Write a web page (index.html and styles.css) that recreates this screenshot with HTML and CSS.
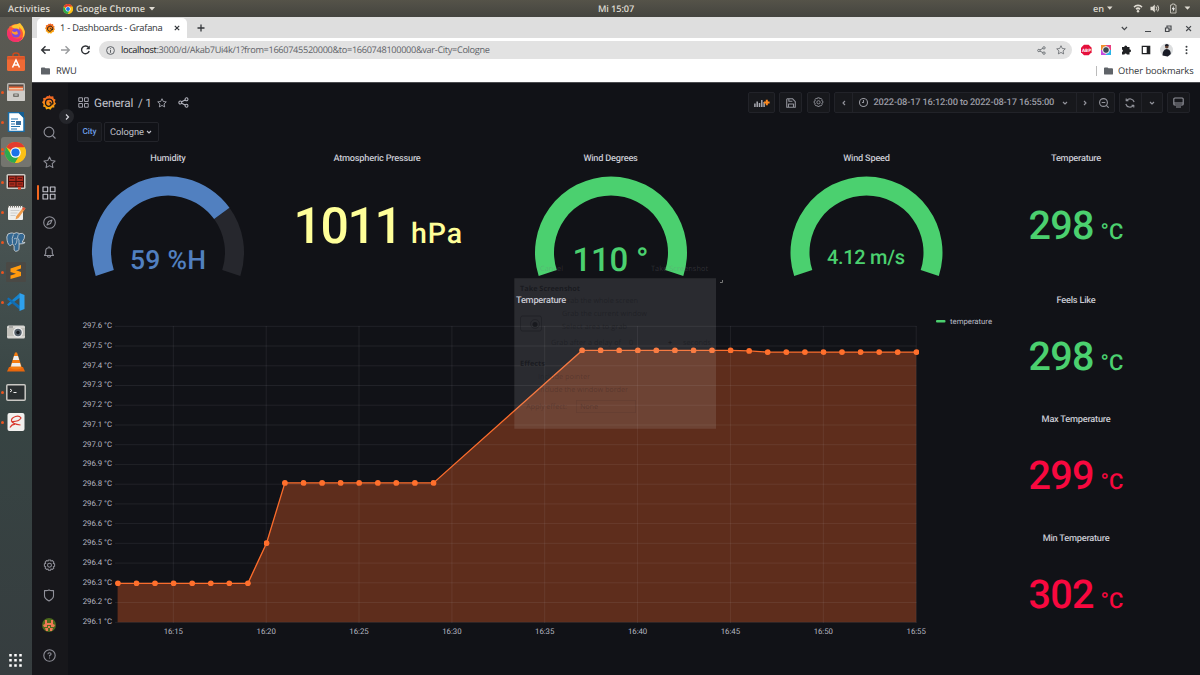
FILE: index.html
```html
<!DOCTYPE html>
<html lang="en">
<head>
<meta charset="utf-8">
<title>1 - Dashboards - Grafana</title>
<link rel="stylesheet" href="styles.css">
</head>
<body>
<svg class="defs" width="0" height="0" aria-hidden="true">
  <symbol id="caret" viewBox="0 0 6 4"><path d="M0 0h6L3 3.6z" fill="currentColor"/></symbol>
  <symbol id="down" viewBox="0 0 8 8"><path class="ln" d="M2 3l2 2 2-2"/></symbol>
  <symbol id="chrome" viewBox="0 0 20 20"><circle cx="10" cy="10" r="10" fill="#fbc116"/><path d="M10 10L1.3 5A10 10 0 0 1 18.7 5z" fill="#e33b2e"/><path d="M1.3 5A10 10 0 0 0 9.5 20L14 12.3 10 10 6 12.2z" fill="#2da94f"/><path d="M10 5h8.7A10 10 0 0 1 9.5 20l4.8-7.5z" fill="#fbc116"/><circle cx="10" cy="10" r="5" fill="#fff"/><circle cx="10" cy="10" r="3.9" fill="#1a73e8"/></symbol>
  <symbol id="folder" viewBox="0 0 10 8"><path d="M1 0h3l1 1h4a1 1 0 0 1 1 1v5a1 1 0 0 1-1 1H1a1 1 0 0 1-1-1V1a1 1 0 0 1 1-1z" fill="#5f6368"/></symbol>
  <symbol id="grid" viewBox="0 0 14 14"><path class="ln" d="M1 1h4.7v4.7H1zM8.3 1H13v4.7H8.3zM1 8.3h4.7V13H1zM8.3 8.3H13V13H8.3z"/></symbol>
  <symbol id="star" viewBox="0 0 14 14"><path class="ln" d="M7 1l1.8 3.9 4.2.5-3.1 2.9.8 4.2L7 10.4l-3.7 2.1.8-4.2L1 5.4l4.2-.5z"/></symbol>
  <symbol id="share" viewBox="0 0 12 12"><path class="ln" d="M3.9 5.2l4-2M3.9 6.8l4 2"/><circle class="ln" cx="2.5" cy="6" r="1.6"/><circle class="ln" cx="9.3" cy="2.5" r="1.6"/><circle class="ln" cx="9.3" cy="9.5" r="1.6"/></symbol>
  <symbol id="gear" viewBox="0 0 14 14"><path class="ln" d="M5.8 1h2.4l.4 1.3 1.5-.6 1.6 1.6-.6 1.5 1.4.4v2.5l-1.4.5.6 1.6-1.6 1.5-1.5-.5-.5 1.3H5.9l-.5-1.3-1.5.5-1.6-1.5.6-1.6-1.4-.5V5.2l1.4-.4-.6-1.5 1.6-1.6 1.5.6z"/><circle class="ln" cx="7" cy="6.7" r="2.1"/></symbol>
  <symbol id="grafana" viewBox="0 0 14 15"><linearGradient id="gf" x1="0" y1="0" x2="0" y2="1"><stop offset="0" stop-color="#f05a28"/><stop offset="1" stop-color="#fbb00a"/></linearGradient><path d="M7.2 0l1.5 1.5 2.6-.2.3 2.3 2 1.2-.9 1.9 1.3 2-1.7 1.5v2.2l-2.2.2-1.6 2.2-2.100-1-2.300.6-.8-2.100-2.300-.8.6-2.300L0 7.200l1.400-1.800L1.200 3l2.400-.3L5 .9l1.500.4z" fill="url(#gf)"/><path class="swirl" d="M10.400 9.600c1.300-2.800-.4-5.400-3-5.400-2.300 0-3.900 1.700-3.900 3.700 0 2.200 1.800 3.500 3.500 3.400 1.200-.1 2.200-1 2.200-2.200 0-1-.8-1.700-1.700-1.600"/></symbol>
</svg>

<header class="topbar">
  <span class="tb-act">Activities</span>
  <svg class="tb-chrome" width="10" height="10"><use href="#chrome"/></svg>
  <span class="tb-app">Google Chrome</span>
  <svg class="tb-caret" width="6" height="4"><use href="#caret"/></svg>
  <span class="tb-clock">Mi 15:07</span>
  <span class="tb-lang">en</span>
  <svg class="tb-tray" width="84" height="15" viewBox="1106 1 84 15">
    <g fill="#dfdbd2"><path d="M1107 6.5h5.500l-2.700 3.200zM1184.500 6.500h6l-3 3.200z"/><path d="M1133.500 6.500a6 6 0 0 1 9 0l-1 1.200a5 5 0 0 0-7 0zM1135.500 8.500a3.500 3.500 0 0 1 5 0l-1.200 1.500a1.500 1.500 0 0 0-2.400 0z"/><circle cx="1138" cy="11.300" r="1.200"/><path d="M1150.500 6.800h2l2.300-2.300v8l-2.300-2.300h-2z"/></g>
    <path d="M1156 6.500q1.200 2 0 4M1157.700 5.300q2 3.200 0 6.200" fill="none" stroke="#dfdbd2"/>
    <path d="M1170.500 5h1.500v-1h2.500v1h1.500v8h-5.500z" fill="none" stroke="#bdbab2"/><path d="M1174 5.800l-2.300 3.400h1.500l-.5 2.800 2.300-3.700h-1.600z" fill="#fff"/>
  </svg>
</header>

<div class="desk">
  <nav class="dock">
    <div class="app"><svg width="20" height="20" viewBox="0 0 20 20"><circle cx="10" cy="11" r="9" fill="#ff5a36"/><path d="M3 4q1 1 2 1 2-3 5-2.500L14 1q4 4 5 9-1 9-9 10 8-3 7-9-1-4-4-6 1 3-1 3z" fill="#ffc62e"/><path d="M1 12q1 8 9 8 5 0 7-5-7 4-11-1L2 6z" fill="#f5306c"/><circle cx="10" cy="11" r="4.500" fill="#7b4ae0"/><path d="M6 9q3 2 5 0l1 3q-3 2-6-1z" fill="#ff9a2e"/></svg></div>
    <div class="app"><svg width="20" height="20" viewBox="0 0 20 20"><path d="M7 5V3q0-2 3-2t3 2v2" fill="none" stroke="#cc4a1c" stroke-width="1.500"/><rect x="1" y="4" width="18" height="15" rx="1.500" fill="#ef6a35"/><path d="M1 4.500h18v3H1z" fill="#d9562a"/><path d="M6.500 15.500L10 8l3.500 7.500M8 13h4.500" fill="none" stroke="#fff" stroke-width="1.500"/></svg></div>
    <div class="app run"><svg width="20" height="20" viewBox="0 0 20 20"><rect x="1" y="1" width="18" height="18" rx="1.500" fill="#b9b7b2"/><rect x="2.500" y="2.500" width="15" height="7" fill="#5b4a42"/><path d="M3 4.500h14V9H3z" fill="#e8683a"/><path d="M3 6h14v1.500H3z" fill="#f3c9a7"/><rect x="1" y="8.500" width="18" height="10.500" rx="1" fill="#cfcdc9"/><rect x="7" y="11.500" width="6" height="3.500" rx="1" fill="#77756f"/><rect x="8.500" y="12.500" width="3" height="1" fill="#ddd"/></svg></div>
    <div class="app run"><svg width="20" height="20" viewBox="0 0 20 20"><path d="M2.500.5H13l5 5v14H2.500z" fill="#fff" stroke="#1a6ea8" stroke-width="1.500"/><path d="M12.500 0H18v6z" fill="#155f94"/><path d="M5 7h7M5 9.500h4M5 12h4M5 14.500h9M5 17h6" stroke="#2474ae" stroke-width="1.100"/><rect x="10" y="9" width="5" height="4" fill="#3a72a2"/></svg></div>
    <div class="app run active"><svg width="21" height="21"><use href="#chrome"/></svg></div>
    <div class="app run"><svg width="20" height="18" viewBox="0 0 20 18"><rect x=".5" y="1" width="19" height="15" rx="1.500" fill="#ccc9c3"/><rect x="2" y="2.500" width="16" height="12" fill="#46120e"/><path d="M3 3.500h6.500v4.500H3zM10.500 3.500h6.500v4.500h-6.500zM3 9h6.500v4.500H3zM10.500 9h6.500v4.500h-6.500z" fill="#a82a1d"/><path d="M4 5.500h4M12 5.500h4M4 11h4M12 11h4" stroke="#5c1610"/><path d="M12 14h3v2.500h-3z" fill="#e0452b"/></svg></div>
    <div class="app run"><svg width="20" height="20" viewBox="0 0 20 20"><rect x="2" y="4" width="15" height="14" rx="1" fill="#eeeeec"/><path d="M2 4.500h15" stroke="#77756f" stroke-width="2" stroke-dasharray="1 1"/><path d="M4.500 8.500h9M4.500 11h7M4.500 13.500h5" stroke="#ccc"/><path d="M17.500 5l2 1.500-7 9.500-3 1.500.8-3.200z" fill="#ee9b4a"/><path d="M17.500 5l2 1.500-1.500 2-2-1.500z" fill="#db5742"/></svg></div>
    <div class="app run"><svg width="20" height="20" viewBox="0 0 20 20"><path d="M5 1Q1 1 .8 5q.3 7 3 8.500 1.200.3 2-1l.8-.5q1 1.500 1.500 2v4q1 2 3.500 1 1.800-1 1.500-4v-3q5.500 0 6-1.500l-3-.3q3-4 2.500-7Q17 .5 13.500 1.500 10-.2 8 1.500 6.500.8 5 1z" fill="#336791" stroke="#ddd" stroke-width=".8"/><path d="M7.500 2.500q-2 3-1 9M13.500 2q-2 1-2 4l1.500 2v4M8 7q3-2 3 1t-2 5" fill="none" stroke="#ddd" stroke-width=".7"/></svg></div>
    <div class="app run"><svg width="20" height="20" viewBox="0 0 20 20"><rect width="20" height="20" rx="1.500" fill="#4a4945"/><path d="M4.500 6.500L15 3v3.500L10 8.300l5 1.600v4L4.500 17v-3.400l5.500-1.900-5.500-1.700z" fill="#ff9a0e"/></svg></div>
    <div class="app run"><svg width="20" height="20" viewBox="0 0 20 20"><path d="M13.500 1.500L1 12.500l1.500 1.500L14 5.500z" fill="#1685d0"/><path d="M13.500 17.500L1 7l1.500-1.500L14 14z" fill="#0f6db5"/><path d="M13.500 1L18.500 3v14l-5 2z" fill="#2ea1ee"/></svg></div>
    <div class="app"><svg width="20" height="16" viewBox="0 0 20 16"><rect x="1" y="1.500" width="18" height="13" rx="1.500" fill="#d7d6d2"/><rect x="1" y="4" width="18" height="8" fill="#c2c1bb"/><circle cx="12" cy="8.500" r="5" fill="#eee"/><circle cx="12" cy="8.500" r="3.700" fill="#55606a"/><circle cx="12" cy="8.500" r="1.700" fill="#15191e"/><path d="M3 3h4" stroke="#777"/></svg></div>
    <div class="app"><svg width="20" height="20" viewBox="0 0 20 20"><path d="M3 15h14l2 4.500H1z" fill="#e8670d"/><path d="M9 .5h2L16 16q-6 3-12 0z" fill="#f57c10"/><path d="M8 4h4l1.200 4H6.800zM6 11h8l1 3.500H5z" fill="#eee"/></svg></div>
    <div class="app run"><svg width="20" height="17" viewBox="0 0 20 17"><rect x=".8" y=".8" width="18.400" height="15.400" rx="1" fill="#2a2f31" stroke="#c9c8c4" stroke-width="1.500"/><path d="M4 5l2 1.500L4 8M7.500 8.500h3" fill="none" stroke="#eee"/></svg></div>
    <div class="app run"><svg width="20" height="20" viewBox="0 0 20 20"><rect x="1.500" y="1" width="17" height="18" rx="2" fill="#f1f0ee"/><path d="M5.500 9.500q7 .5 9.500-3.500-1.500-2.500-5.500-1.500-4.500 1.500-4 4.500 1 3 9 4M4 15.500q2-3.500 5-3" fill="none" stroke="#d9392e" stroke-width="1.200"/></svg></div>
    <svg class="apps" width="13" height="13" viewBox="0 0 13 13"><path d="M1.500 0v13M6.500 0v13M11.500 0v13" stroke="#fff" stroke-width="2.500" stroke-dasharray="2.500 2.600"/></svg>
  </nav>

  <div class="browser">
    <div class="tabs">
      <div class="tab">
        <svg width="10" height="11"><use href="#grafana"/></svg>
        <span class="tab-name">1 - Dashboards - Grafana</span>
        <svg width="6" height="6" viewBox="0 0 6 6"><path d="M.8.8l4.400 4.400M5.200.8L.8 5.200" stroke="#33363a" stroke-width="1.200"/></svg>
      </div>
      <svg class="plus" width="8" height="8" viewBox="0 0 8 8"><path d="M4 .5v7M.5 4h7" stroke="#33363a" stroke-width="1.300"/></svg>
      <svg class="win" width="75" height="10" viewBox="1120 22 75 10"><g fill="none" stroke="#44474b" stroke-width="1.200"><path d="M1121.800 26l2.600 2.600 2.600-2.600M1145 30.500h6M1186.200 25.200l4.800 4.800M1191 25.200l-4.800 4.800"/><path d="M1165.500 27h3.500v3.500h-3.500zM1167 27v-2h4v4h-2"/></g></svg>
    </div>
    <div class="urlrow">
      <svg class="nav" width="52" height="14" viewBox="40 43 52 14"><g fill="none" stroke="#2e3135" stroke-width="1.400"><path d="M50 50h-8M45.500 46.200L41.700 50l3.800 3.800"/><path stroke="#9a9c9e" d="M61 50h8M65.500 46.200l3.800 3.800-3.800 3.800"/><path d="M88.600 47.500a3.900 3.900 0 1 0 .6 3.500"/></g><path d="M89.800 45.500v3.800h-3.800z" fill="#2e3135"/></svg>
      <div class="url">
        <svg width="9" height="9" viewBox="0 0 9 9"><circle cx="4.500" cy="4.500" r="3.900" fill="none" stroke="#5f6368"/><path d="M4.500 4v2.800M4.500 2.200v1" stroke="#5f6368"/></svg>
        <span class="addr"><b>localhost</b>:3000/d/Akab7Ui4k/1?from=1660745520000&amp;to=1660748100000&amp;var-City=Cologne</span>
        <svg class="u-share" width="9" height="9"><use href="#share"/></svg>
        <svg class="u-star" width="10" height="10"><use href="#star"/></svg>
      </div>
      <svg class="ext" width="110" height="14" viewBox="1080 43 110 14">
        <path d="M1084 44.800h4.600l3 3v4.500l-3 3h-4.600l-3-3v-4.500z" fill="#e5103c"/><text x="1082" y="52" class="abp">ABP</text>
        <path d="M1101 45h5v5h-5z" fill="#f1902e"/><path d="M1106 45h5v5h-5z" fill="#e93f80"/><path d="M1101 50h5v5h-5z" fill="#c84ae0"/><path d="M1106 50h5v5h-5z" fill="#2ab5e8"/><circle cx="1106" cy="50" r="3.400" fill="#3b4852" stroke="#fff"/>
        <path d="M1122 47h2.200a1.500 1.500 0 0 1 3 0h2.300v2.300a1.500 1.500 0 0 1 0 3v2.200h-2.600a1.300 1.300 0 0 0-2.500 0h-2.400v-2.500a1.300 1.300 0 0 0 0-2.500z" fill="#202124"/>
        <path d="M1142.300 46.300h7.400v7.400h-7.400z" fill="none" stroke="#202124" stroke-width="1.200"/><path d="M1146.700 46h3v8h-3z" fill="#202124"/>
        <circle cx="1166.500" cy="50" r="6.500" fill="#dcdedf"/><circle cx="1166.800" cy="46.800" r="1.800" fill="#5c3c2e"/><path d="M1164.800 46a2 2 0 0 1 4 0zM1162.500 55.500q0-6 4.300-6.500 4 .5 4 5l-3 2.400z" fill="#181b26"/>
        <g fill="#3c4043"><circle cx="1186.500" cy="46.700" r="1"/><circle cx="1186.500" cy="50" r="1"/><circle cx="1186.500" cy="53.300" r="1"/></g>
      </svg>
    </div>
    <div class="bookmarks">
      <svg width="9" height="8"><use href="#folder"/></svg><span class="bm1">RWU</span>
      <i class="bm-sep"></i>
      <svg width="9" height="8"><use href="#folder"/></svg><span class="bm2">Other bookmarks</span>
    </div>

    <div class="grafana">
      <aside class="side">
        <div class="s"><svg width="14" height="15"><use href="#grafana"/></svg></div>
        <div class="s"><svg width="13" height="13" viewBox="0 0 13 13"><circle class="ln" cx="6" cy="6" r="4.900"/><path class="ln" d="M9.500 9.500l3 3"/></svg></div>
        <div class="s"><svg width="13" height="13"><use href="#star"/></svg></div>
        <div class="s on"><svg width="14" height="14"><use href="#grid"/></svg></div>
        <div class="s"><svg width="13" height="13" viewBox="0 0 13 13"><circle class="ln" cx="6.500" cy="6.500" r="5.800"/><path class="ln" d="M9 4L7.500 7.500 4 9l1.500-3.500z"/></svg></div>
        <div class="s"><svg width="12" height="13" viewBox="0 0 12 13"><path class="ln" d="M1.500 9.500h9l-1.200-2V5a3.300 3.300 0 0 0-6.600 0v2.500zM6 .3v1.200M4.300 10a1.800 1.800 0 0 0 3.400 0"/></svg></div>
        <div class="s push"><svg width="13" height="13"><use href="#gear"/></svg></div>
        <div class="s"><svg width="12" height="13" viewBox="0 0 12 13"><path class="ln" d="M1.500 1.500Q4 2 6 .9 8 2 10.500 1.500V7q0 2.500-4.500 5-4.500-2.500-4.500-5z"/></svg></div>
        <div class="s"><svg width="14" height="14" viewBox="0 0 14 14"><circle cx="7" cy="7" r="7" fill="#4d6a1d"/><path d="M3 2h2v3h4V2h2v4l2 1-1 2H9V7H5v2H2L1 7l2-1zM6 8h2v2H6zM3 10h3v3H4zM8 10h3l-1 3H8z" fill="#ee7a55"/></svg></div>
        <div class="s"><svg width="13" height="13" viewBox="0 0 13 13"><circle class="ln" cx="6.500" cy="6.500" r="5.700"/><path class="ln" d="M4.900 5.300q0-1.600 1.600-1.600t1.600 1.400q0 1-1.600 1.500v.8M6.500 8.600v1"/></svg></div>
        <div class="toggle"><svg width="8" height="8" viewBox="0 0 8 8"><path d="M3 1.500L5.500 4 3 6.500" fill="none" stroke="#d5d6dc" stroke-width="1.200"/></svg></div>
      </aside>

      <main class="main">
        <div class="head">
          <svg width="11" height="11"><use href="#grid"/></svg>
          <span class="crumb">General</span><span class="crumb2">/ 1</span>
          <svg class="h-star" width="10" height="10"><use href="#star"/></svg>
          <svg class="h-share" width="11" height="11"><use href="#share"/></svg>
          <div class="tools">
            <div class="btn w1"><svg width="16" height="10" viewBox="0 0 16 10"><path d="M.9 9V5.500M3.200 9V3.500M5.500 9V5M7.800 9V2M10.100 9V4" stroke="#a9aab2" stroke-width="1.500"/><path d="M10 4.500h5.600M12.800 1.700v5.600" stroke="#ff8a1f" stroke-width="2"/></svg></div>
            <div class="btn w2"><svg width="10" height="10" viewBox="0 0 14 14"><path class="ln b" d="M2 1h7l4 4v8H1V2zM4 1v3.500h5M3.500 13V8.500h7V13"/></svg></div>
            <div class="btn w2"><svg width="11" height="11"><use href="#gear"/></svg></div>
            <div class="btn w3">
              <span class="c1"><svg width="8" height="8" viewBox="0 0 8 8"><path class="ln" d="M5 2L3 4l2 2"/></svg></span>
              <span class="c2"><svg width="9" height="9" viewBox="0 0 9 9"><circle class="ln" cx="4.500" cy="4.500" r="4"/><path class="ln" d="M4.500 2v2.500H3"/></svg><em>2022-08-17 16:12:00 to 2022-08-17 16:55:00</em><svg width="8" height="8"><use href="#down"/></svg></span>
              <span class="c1"><svg width="8" height="8" viewBox="0 0 8 8"><path class="ln" d="M3 2l2 2-2 2"/></svg></span>
              <span class="c3"><svg width="10" height="10" viewBox="0 0 10 10"><circle class="ln" cx="4.500" cy="4.500" r="3.900"/><path class="ln" d="M7.300 7.300L9.700 9.700M2.700 4.500h3.600"/></svg></span>
            </div>
            <div class="btn w4">
              <span class="c3"><svg width="10" height="10" viewBox="0 0 10 10"><path class="ln" d="M.8 6a4.300 4.300 0 0 0 7.500 1.500M9.200 4A4.300 4.300 0 0 0 1.700 2.500M1.200.5v2.300h2.300M8.800 9.500V7.200H6.500"/></svg></span>
              <span class="c3"><svg width="8" height="8"><use href="#down"/></svg></span>
            </div>
            <div class="btn w2"><svg width="11" height="11" viewBox="0 0 11 11"><rect class="ln" x=".8" y="1" width="9.400" height="7" rx="1"/><path class="ln" d="M1 6h9M3 10h5"/></svg></div>
          </div>
        </div>
        <div class="vars"><span class="v-label">City</span><span class="v-val">Cologne<svg width="8" height="8"><use href="#down"/></svg></span></div>

        <div class="board">
          <div class="left">
            <div class="gauges">
              <section class="panel"><h2>Humidity</h2>
                <svg width="184" height="126" viewBox="76 166 184 126"><g transform="translate(168 252.500)"><path d="M61.500-44.700A76 76 0 0 1 72.300 23.500L54.200 17.600A57 57 0 0 0 46.100-33.500z" fill="#26272d"/><path d="M-72.300 23.500A76 76 0 0 1 61.500-44.700L46.100-33.500A57 57 0 0 0-54.200 17.600z" fill="#5180c0"/></g><text class="g25 blue" x="168" y="269" text-anchor="middle" textLength="76">59 %H</text></svg></section>
              <section class="panel"><h2>Atmospheric Pressure</h2>
                <svg width="234" height="126" viewBox="260 166 234 126"><text class="g50 yellow" x="293.500" y="242.800" textLength="109.500">1011</text><text class="g28 yellow" x="411" y="242.600" textLength="51">hPa</text></svg></section>
              <section class="panel"><h2>Wind Degrees</h2>
                <svg width="233" height="126" viewBox="494 166 233 126"><path transform="translate(611 252.500)" d="M-72.300 23.500A76 76 0 1 1 72.300 23.500L54.200 17.600A57 57 0 1 0-54.200 17.600z" fill="#4bd06f"/><text class="g33 green" x="572.500" y="271.300" textLength="76">110 °</text></svg></section>
              <section class="panel"><h2>Wind Speed</h2>
                <svg width="279" height="126" viewBox="727 166 279 126"><path transform="translate(866.500 252.500)" d="M-72.300 23.500A76 76 0 1 1 72.300 23.500L54.200 17.600A57 57 0 1 0-54.200 17.600z" fill="#4bd06f"/><text class="g20 green" x="827" y="264.300" textLength="78">4.12 m/s</text></svg></section>
            </div>
            <section class="panel chart"><h2>Temperature</h2>
              <svg width="930" height="341" viewBox="76 308 930 341">
                <defs><marker id="dot" viewBox="0 0 6 6" refX="3" refY="3" markerWidth="6" markerHeight="6" markerUnits="userSpaceOnUse"><circle cx="3" cy="3" r="2.900" fill="#ff6f2c"/></marker></defs>
                <path d="M117.600 622.200V583H247.600L266.200 543 284.800 482.800H433.300L581.900 350.300H730.400L749 350.900 767.500 352H916.200V622.200z" fill="#5e2d1c"/>
                <path class="gridln" d="M115 326.300H916.500M115 346H916.500M115 365.800H916.500M115 385.500H916.500M115 405.200H916.500M115 425H916.500M115 444.700H916.500M115 464.400H916.500M115 484.200H916.500M115 503.900H916.500M115 523.600H916.500M115 543.300H916.500M115 563.100H916.500M115 582.800H916.500M115 602.500H916.500M115 622.300H916.500M173.300 326V623M266.200 326V623M359 326V623M451.900 326V623M544.700 326V623M637.600 326V623M730.400 326V623M823.300 326V623M916.200 326V623"/>
                <polyline class="series" points="117.900,583.300 136.500,583.300 155,583.300 173.600,583.300 192.200,583.300 210.800,583.300 229.300,583.300 247.900,583.300 266.500,543.200 284.900,482.900 303.500,482.900 322.100,482.900 340.600,482.900 359.200,482.900 377.800,482.900 396.300,482.900 414.900,482.900 433.500,482.900 582.100,350.400 600.600,350.400 619.200,350.400 637.800,350.400 656.300,350.400 674.900,350.400 693.500,350.400 712,350.400 730.600,350.400 749.200,350.900 767.700,352.100 786.300,352.100 804.900,352.100 823.500,352.100 842,352.100 860.600,352.100 879.200,352.100 897.700,352.100 916.400,352.100"/>
                <g class="axis" text-anchor="end">
                  <text x="112" y="328.200">297.6 °C</text><text x="112" y="347.900">297.5 °C</text><text x="112" y="367.700">297.4 °C</text><text x="112" y="387.400">297.3 °C</text><text x="112" y="407.100">297.2 °C</text><text x="112" y="426.900">297.1 °C</text><text x="112" y="446.600">297.0 °C</text><text x="112" y="466.300">296.9 °C</text><text x="112" y="486">296.8 °C</text><text x="112" y="505.800">296.7 °C</text><text x="112" y="525.500">296.6 °C</text><text x="112" y="545.200">296.5 °C</text><text x="112" y="565">296.4 °C</text><text x="112" y="584.700">296.3 °C</text><text x="112" y="604.400">296.2 °C</text><text x="112" y="624.200">296.1 °C</text>
                </g>
                <g class="axis" text-anchor="middle">
                  <text x="173.300" y="633.700">16:15</text><text x="266.200" y="633.700">16:20</text><text x="359" y="633.700">16:25</text><text x="451.900" y="633.700">16:30</text><text x="544.700" y="633.700">16:35</text><text x="637.600" y="633.700">16:40</text><text x="730.400" y="633.700">16:45</text><text x="823.300" y="633.700">16:50</text><text x="916.200" y="633.700">16:55</text>
                </g>
                <rect x="936" y="320" width="9.500" height="2.500" rx="1" fill="#4bd06f"/><text class="axis" x="950" y="323.800" textLength="42">temperature</text>
              </svg>
            </section>
          </div>
          <div class="right">
            <section class="panel tall"><h2>Temperature</h2><svg width="140" height="126" viewBox="0 16 140 126"><text class="g40 green" x="22.500" y="89">298</text><text class="g22 green" x="94.500" y="89">°C</text></svg></section>
            <section class="panel"><h2>Feels Like</h2><svg width="140" height="103" viewBox="0 16 140 103"><text class="g40 green" x="22.500" y="77.500">298</text><text class="g22 green" x="94.500" y="77.500">°C</text></svg></section>
            <section class="panel"><h2>Max Temperature</h2><svg width="140" height="103" viewBox="0 16 140 103"><text class="g40 red" x="22.500" y="77.500">299</text><text class="g22 red" x="94.500" y="77.500">°C</text></svg></section>
            <section class="panel"><h2>Min Temperature</h2><svg width="140" height="103" viewBox="0 16 140 103"><text class="g40 red" x="22.500" y="77.500">302</text><text class="g22 red" x="94.500" y="77.500">°C</text></svg></section>
          </div>
        </div>
      </main>
    </div>
  </div>
</div>

<svg class="ghost" width="212" height="175" viewBox="514 256 212 175">
  <path d="M514.300 278.200h201.700v150.600h-201.700z" fill="#d9d9d9" fill-opacity=".13"/>
  <path d="M720 282.500h2.500v-2.500" fill="none" stroke="#777"/>
  <g class="gt faint"><text x="540" y="270.500" textLength="23">Cancel</text><text x="651" y="270.500" textLength="57">Take Screenshot</text></g>
  <g class="gt">
    <text class="gb" x="520" y="290.500" textLength="60">Take Screenshot</text>
    <text x="562" y="303" textLength="76">Grab the whole screen</text>
    <text x="562" y="316" textLength="85">Grab the current window</text>
    <text x="562" y="328.500" textLength="65">Select area to grab</text>
    <text x="551" y="344.500" textLength="70">Grab after a delay of</text><text x="629" y="344.500">0</text><text class="gb" x="668" y="344.500">+</text><text x="683" y="344.500" textLength="28">seconds</text>
    <text class="gb" x="520" y="366" textLength="25">Effects</text>
  </g>
  <g class="gt low">
    <text x="538" y="378.500" textLength="52">Include pointer</text>
    <text x="538" y="391.500" textLength="90">Include the window border</text>
    <text x="526" y="408.500" textLength="41">Apply effect:</text><text x="580" y="408.500" textLength="18">None</text>
  </g>
  <g fill="none" stroke="#111217" stroke-opacity=".3"><rect x="520.500" y="316" width="21" height="15" rx="2"/><circle cx="535" cy="324" r="4.500"/><path d="M576.500 400.500h59v12h-59z" stroke-opacity=".07"/></g><circle cx="535" cy="324.500" r="2.500" fill="#111217" fill-opacity=".7"/>
</svg>
</body>
</html>
```
FILE: styles.css
```css
* { box-sizing: border-box; }
body { margin: 0; width: 1200px; height: 675px; overflow: hidden; display: flex; flex-direction: column; position: relative; background: #111217; font-family: Roboto, sans-serif; text-rendering: geometricPrecision; }
svg { display: block; flex: none; }
.defs { position: absolute; }
.ln { fill: none; stroke: currentColor; stroke-width: 1.1; stroke-linejoin: round; }
.ln.b { stroke-width: 1.500; }
.swirl { fill: none; stroke: #17171b; stroke-width: 1.300; }
.tab .swirl { stroke: #fff; }

.topbar { height: 17px; flex: none; display: flex; align-items: center; background: linear-gradient(#555349, #44443f); color: #dfdbd2; font: 600 9.2px/16px "Open Sans", sans-serif; padding-left: 8px; white-space: nowrap; }
.tb-act { width: 55px; letter-spacing: .2px; }
.tb-chrome { margin-right: 3px; }
.tb-app { width: 73px; letter-spacing: .05px; }
.tb-clock { margin-left: 443px; width: 495px; letter-spacing: -.1px; }
.tb-lang { width: 13px; }

.desk { display: flex; flex: 1; min-height: 0; }
.dock { width: 32px; flex: none; display: flex; flex-direction: column; padding: 0 1px 8px; background: linear-gradient(#5b5a53, #555650 16%, #475251 35%, #374443 60%, #363d3f); }
.app { height: 30px; flex: none; display: flex; align-items: center; justify-content: center; border-radius: 3px; padding-right: 1px; position: relative; }
.app.active { background: #74756f; }
.run::before { content: ""; position: absolute; left: 0; top: 14px; width: 3px; height: 3px; border-radius: 50%; background: #e95420; }
.run.active::before { top: 11px; box-shadow: 0 4px 0 #e95420; }
.apps { margin: auto 0 0 8px; }

.browser { flex: 1; min-width: 0; display: flex; flex-direction: column; background: #fff; }
.tabs { height: 21px; flex: none; display: flex; align-items: center; background: #dedede; padding: 1px 5px 0 5px; font: 9.3px/20px "Open Sans", sans-serif; color: #303336; }
.tab { width: 150px; height: 20px; background: #fff; border-radius: 5px 5px 0 0; display: flex; align-items: center; padding-left: 8px; }
.tab-name { margin-left: 5px; width: 114px; white-space: nowrap; letter-spacing: -.24px; }
.plus { margin-left: 10px; }
.win { margin-left: auto; }
.urlrow { height: 24px; flex: none; display: flex; align-items: center; padding: 0 10px 0 8px; }
.url { width: 973px; height: 18px; border-radius: 9px; background: #e2e2e2; margin-left: 7px; display: flex; align-items: center; padding-left: 7px; color: #5f6368; font: 9.2px/18px "Open Sans", sans-serif; }
.addr { margin-left: 6px; width: 916px; letter-spacing: -.33px; white-space: nowrap; }
.addr b { font-weight: 400; color: #202124; }
.u-star { margin-left: 10px; }
.ext { margin-left: 8px; }
.abp { font: 700 4.500px "Open Sans", sans-serif; fill: #fff; }
.bookmarks { height: 20px; flex: none; display: flex; align-items: center; padding: 0 6px 3px 9px; font: 9.3px/17px "Open Sans", sans-serif; color: #303336; white-space: nowrap; }
.bm1 { margin-left: 6px; letter-spacing: -.15px; }
.bm-sep { margin: 0 7px 0 auto; width: 1px; height: 10px; background: #bbb; }
.bm2 { margin-left: 5px; width: 76px; letter-spacing: -.05px; }

.grafana { flex: 1; min-height: 0; display: flex; background: #111217; border-top: 1px solid #4b4c50; }
.side { width: 36px; flex: none; background: #17171b; display: flex; flex-direction: column; padding: 4.500px 0 5px; position: relative; color: #90919a; }
.s { height: 30px; flex: none; display: flex; align-items: center; justify-content: center; padding-right: 2px; position: relative; }
.s.on { color: #c7c8d1; }
.s.on::before { content: ""; position: absolute; left: 5px; top: 7px; width: 2px; height: 15px; background: #f4671f; border-radius: 1px; }
.push { margin-top: auto; }
.toggle { position: absolute; left: 27px; top: 26px; width: 15px; height: 15px; border-radius: 50%; background: #25262b; display: flex; align-items: center; justify-content: center; }

.main { flex: 1; min-width: 0; color: #b9bac4; }
.head { height: 39px; display: flex; align-items: center; padding: 0 10px; }
.crumb { font-size: 11.700px; margin-left: 5px; width: 44px; color: #c2c3cc; letter-spacing: -.05px; }
.crumb2 { font-size: 11.700px; width: 19px; color: #c2c3cc; white-space: nowrap; letter-spacing: -.2px; }
.h-share { margin-left: 11px; }
.tools { margin-left: auto; display: flex; gap: 4.400px; color: #93949c; }
.btn { height: 21px; background: #17181c; border: 1px solid #222329; border-radius: 2px; display: flex; align-items: center; justify-content: center; }
.w1 { width: 27px; } .w2 { width: 23px; } .w3 { width: 280.500px; } .w4 { width: 43.500px; }
.btn span { height: 100%; display: flex; align-items: center; justify-content: center; border-left: 1px solid #222329; }
.btn span:first-child { border-left: 0; }
.c1 { width: 17px; } .c2 { flex: 1; } .c3 { width: 21px; }
.c2 em { font: 500 9.300px Roboto, sans-serif; color: #9c9da6; margin: 0 7px 0 5px; width: 181px; white-space: nowrap; letter-spacing: -.17px; }
.vars { display: flex; gap: 2px; height: 20px; padding-left: 9px; font-size: 9.300px; letter-spacing: -.05px; }
.v-label { width: 25px; background: #17181c; border: 1px solid #202127; border-radius: 2px; color: #6e9fe8; font-weight: 500; font-size: 8.200px; line-height: 19px; text-align: center; }
.v-val { width: 55px; border: 1px solid #23242a; border-radius: 2px; display: flex; align-items: center; justify-content: center; gap: 1px; color: #c0c1ca; }

.board { display: flex; padding: 8px 0 0 8px; }
.left { width: 930px; }
.right { width: 140px; }
.gauges { display: grid; grid-template-columns: 184px 234px 233px 279px; }
.panel { height: 119px; }
.gauges .panel, .tall { height: 142px; }
.panel.chart { height: 357px; }
.panel h2 { margin: 0; height: 16px; font: 500 9.200px/18px Roboto, sans-serif; letter-spacing: -.22px; text-align: center; color: #c8c9d2; }
.chart h2 { position: relative; z-index: 3; }
.g50 { font-size: 50px; } .g40 { font-size: 39.500px; letter-spacing: -.7px; } .g33 { font-size: 33px; } .g28 { font-size: 28.500px; } .g25 { font-size: 26.500px; } .g22 { font-size: 22px; } .g20 { font-size: 20px; }
.g50, .g40, .g33, .g28, .g25, .g22, .g20 { font-weight: 500; }
.blue { fill: #5180c0; } .yellow { fill: #ffff99; } .green { fill: #4bd06f; } .red { fill: #f8083f; }
.gridln { fill: none; stroke: #ccccdc; stroke-opacity: .085; stroke-width: 1; }
.series { fill: none; stroke: #fa6c2c; stroke-width: 1.300; marker-start: url(#dot); marker-mid: url(#dot); marker-end: url(#dot); }
.axis { font-size: 7.800px; letter-spacing: -.03px; fill: #b9bac4; }

.ghost { position: absolute; left: 514px; top: 256px; z-index: 2; }
.gt { font: 7.300px "Open Sans", sans-serif; fill: #111217; fill-opacity: .4; }
.gb { font-weight: 700; fill-opacity: .65; }
.low { fill-opacity: .22; }
.faint { fill: #77777c; fill-opacity: .3; }
```
